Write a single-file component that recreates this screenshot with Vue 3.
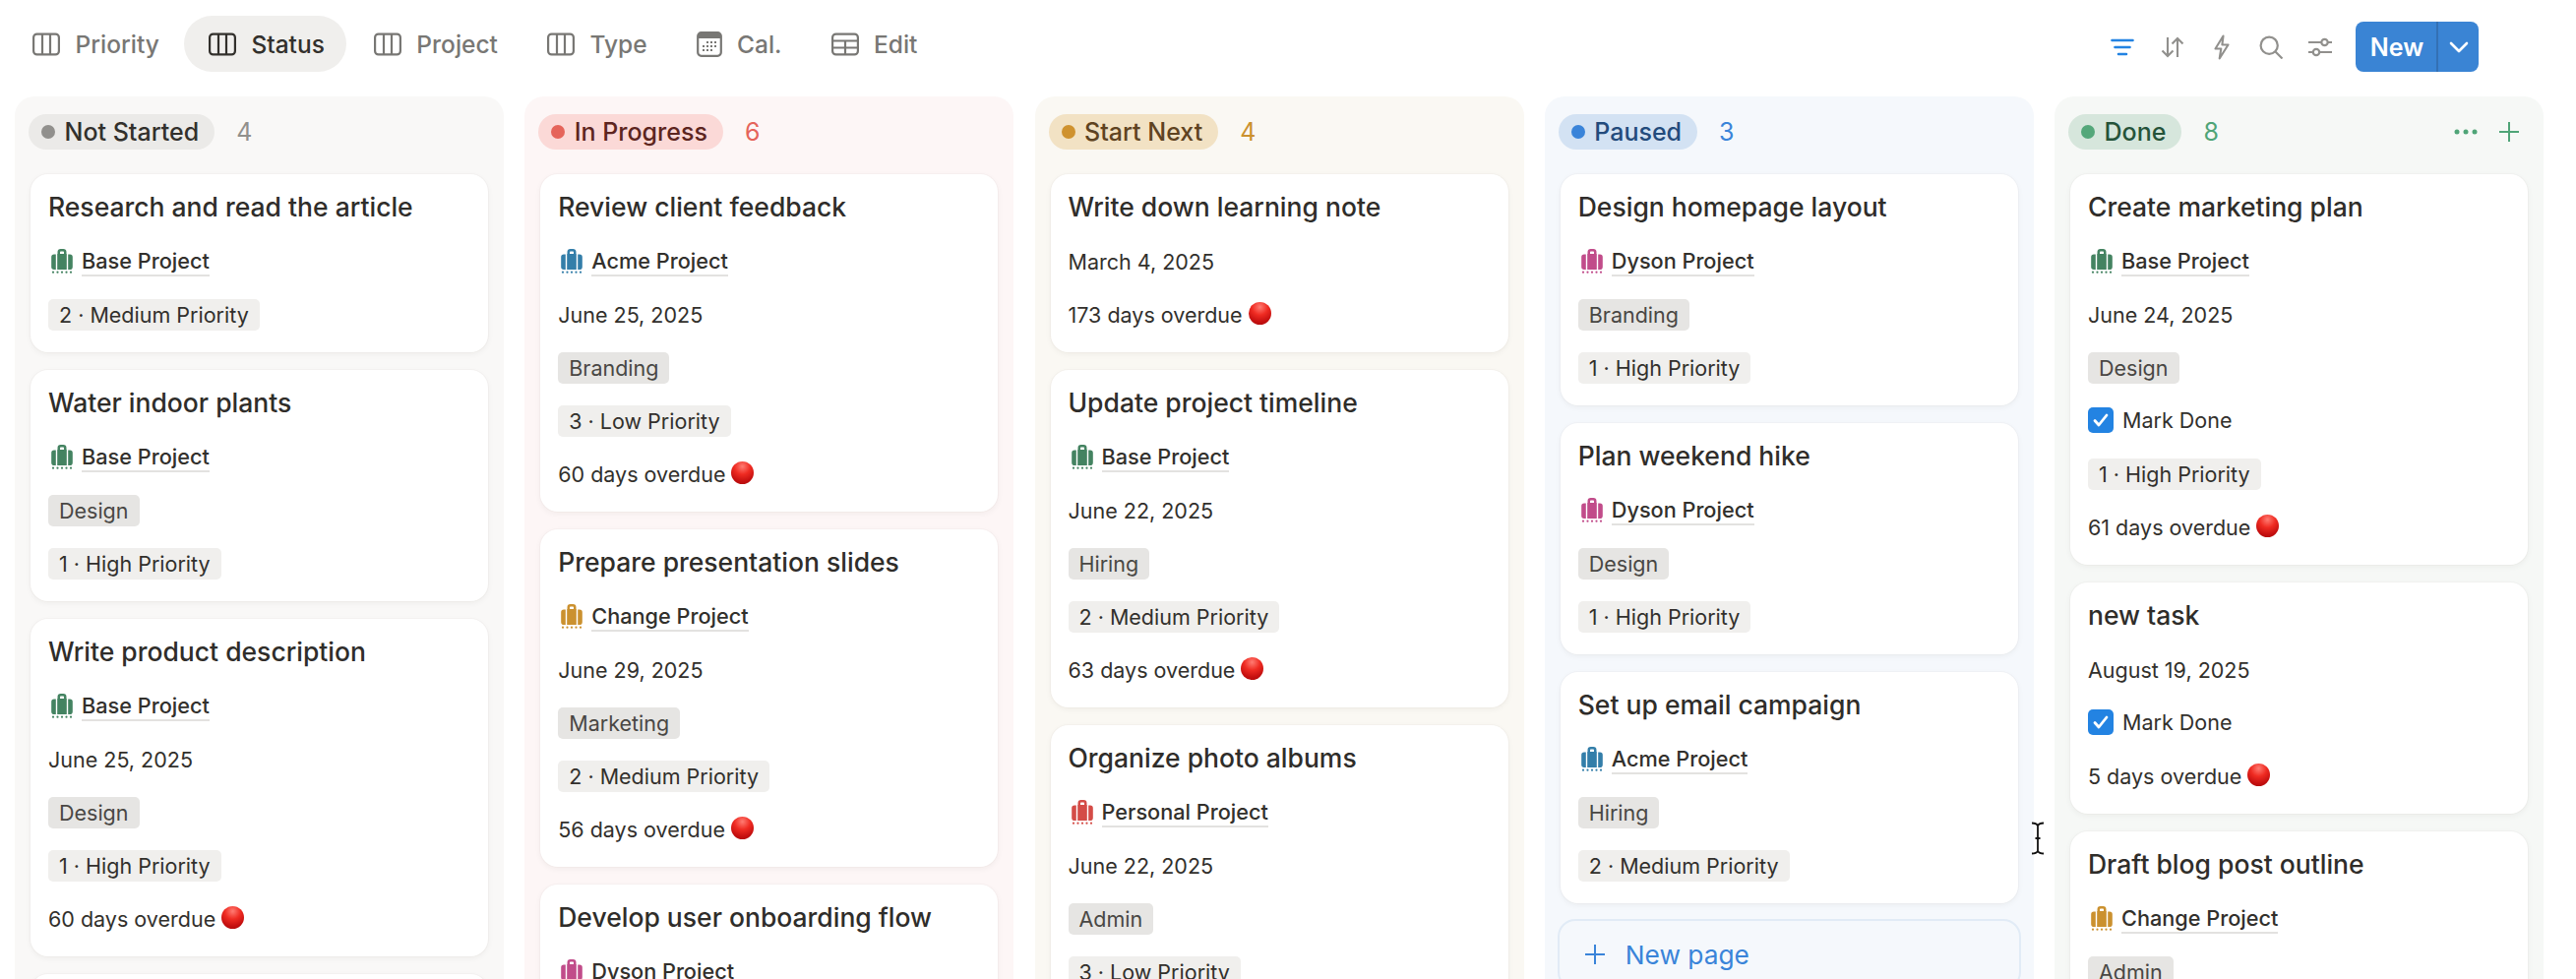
<script setup>
const P = {
  base: ['Base Project', '#448361'],
  acme: ['Acme Project', '#337ea9'],
  change: ['Change Project', '#cb912f'],
  dyson: ['Dyson Project', '#c14c8a'],
  personal: ['Personal Project', '#d44c47']
}
const tabs = [
  { label: 'Priority', icon: 'board' },
  { label: 'Status', icon: 'board', active: true },
  { label: 'Project', icon: 'board' },
  { label: 'Type', icon: 'board' },
  { label: 'Cal.', icon: 'cal' },
  { label: 'Edit', icon: 'table' }
]
const HIGH = '1 · High Priority', MED = '2 · Medium Priority', LOW = '3 · Low Priority'
const columns = [
  { name: 'Not Started', count: 4, theme: 'gray', cards: [
    { title: 'Research and read the article', project: 'base', priority: MED },
    { title: 'Water indoor plants', project: 'base', tag: 'Design', priority: HIGH },
    { title: 'Write product description', project: 'base', date: 'June 25, 2025', tag: 'Design', priority: HIGH, overdue: '60 days overdue' },
    { title: 'Clean the garage', project: 'base', date: 'June 25, 2025' }
  ] },
  { name: 'In Progress', count: 6, theme: 'red', cards: [
    { title: 'Review client feedback', project: 'acme', date: 'June 25, 2025', tag: 'Branding', priority: LOW, overdue: '60 days overdue' },
    { title: 'Prepare presentation slides', project: 'change', date: 'June 29, 2025', tag: 'Marketing', priority: MED, overdue: '56 days overdue' },
    { title: 'Develop user onboarding flow', project: 'dyson', date: 'June 25, 2025' }
  ] },
  { name: 'Start Next', count: 4, theme: 'yellow', cards: [
    { title: 'Write down learning note', date: 'March 4, 2025', overdue: '173 days overdue' },
    { title: 'Update project timeline', project: 'base', date: 'June 22, 2025', tag: 'Hiring', priority: MED, overdue: '63 days overdue' },
    { title: 'Organize photo albums', project: 'personal', date: 'June 22, 2025', tag: 'Admin', priority: LOW }
  ] },
  { name: 'Paused', count: 3, theme: 'blue', newPage: true, cards: [
    { title: 'Design homepage layout', project: 'dyson', tag: 'Branding', priority: HIGH },
    { title: 'Plan weekend hike', project: 'dyson', tag: 'Design', priority: HIGH },
    { title: 'Set up email campaign', project: 'acme', tag: 'Hiring', priority: MED }
  ] },
  { name: 'Done', count: 8, theme: 'green', actions: true, cards: [
    { title: 'Create marketing plan', project: 'base', date: 'June 24, 2025', tag: 'Design', done: true, priority: HIGH, overdue: '61 days overdue' },
    { title: 'new task', date: 'August 19, 2025', done: true, overdue: '5 days overdue' },
    { title: 'Draft blog post outline', project: 'change', tag: 'Admin', priority: LOW }
  ] }
]
</script>

<template>
  <div class="page">
    <header class="toolbar">
      <div v-for="t in tabs" :key="t.label" class="tab" :class="{ active: t.active }">
        <svg v-if="t.icon === 'board'" class="tab-icon" width="28" height="24" viewBox="0 0 28 24" fill="none" stroke="currentColor" stroke-width="2.2">
          <rect x="1.1" y="1.6" width="25.8" height="20.8" rx="3.5" />
          <path d="M10 2v20M18 2v20" />
        </svg>
        <svg v-else-if="t.icon === 'cal'" class="tab-icon" width="26" height="26" viewBox="0 0 26 26" fill="none">
          <rect x="1.2" y="1.2" width="23.6" height="23.6" rx="3.5" stroke="currentColor" stroke-width="2.2" />
          <path d="M2 3.5a2 2 0 0 1 2-2h18a2 2 0 0 1 2 2V7H2z" fill="currentColor" />
          <g fill="currentColor">
            <rect x="10" y="10" width="2" height="2" /><rect x="14" y="10" width="2" height="2" /><rect x="18" y="10" width="2" height="2" />
            <rect x="6" y="14" width="2" height="2" /><rect x="10" y="14" width="2" height="2" /><rect x="14" y="14" width="2" height="2" /><rect x="18" y="14" width="2" height="2" />
            <rect x="6" y="18" width="2" height="2" /><rect x="10" y="18" width="2" height="2" /><rect x="14" y="18" width="2" height="2" />
          </g>
        </svg>
        <svg v-else class="tab-icon" width="28" height="24" viewBox="0 0 28 24" fill="none" stroke="currentColor" stroke-width="2.2">
          <rect x="1.1" y="1.6" width="25.8" height="20.8" rx="3.5" />
          <path d="M2 8.5h24M2 15.5h24M14 8.5v14" />
        </svg>
        <span>{{ t.label }}</span>
      </div>

      <div class="tools">
        <span class="tool filter">
          <svg width="24" height="18" viewBox="0 0 24 18" fill="none" stroke="currentColor" stroke-width="2.6" stroke-linecap="round">
            <path d="M1.5 2h21M4.5 9h15M8 16h8" />
          </svg>
        </span>
        <span class="tool">
          <svg width="24" height="22" viewBox="0 0 24 22" fill="none" stroke="currentColor" stroke-width="2.1">
            <path d="M7 1v19M1.5 14.5 7 20l5.5-5.5M17 21V2M11.5 7.5 17 2l5.5 5.5" />
          </svg>
        </span>
        <span class="tool">
          <svg width="16" height="26" viewBox="0 0 16 26" fill="none" stroke="currentColor" stroke-width="2.1" stroke-linejoin="round">
            <path d="M9.5 1.5 1.5 14.5h5.8l-1.6 10 8.8-14H8.4z" />
          </svg>
        </span>
        <span class="tool">
          <svg width="24" height="24" viewBox="0 0 24 24" fill="none" stroke="currentColor" stroke-width="2.2">
            <circle cx="10.2" cy="10.2" r="8.6" /><path d="m16.5 16.5 7 7" />
          </svg>
        </span>
        <span class="tool">
          <svg width="24" height="20" viewBox="0 0 24 20" fill="none" stroke="currentColor" stroke-width="2.2">
            <path d="M0 5h13M20 5h4M0 15h5M11.5 15H24" />
            <circle cx="16.5" cy="5" r="3.2" /><circle cx="8" cy="15" r="3.2" />
          </svg>
        </span>
        <div class="new-btn">
          <span class="new-label">New</span>
          <span class="new-caret">
            <svg width="20" height="12" viewBox="0 0 20 12" fill="none" stroke="#fff" stroke-width="2.6" stroke-linecap="round" stroke-linejoin="round">
              <path d="m2 2 8 8 8-8" />
            </svg>
          </span>
        </div>
      </div>
    </header>

    <main class="board">
      <section v-for="col in columns" :key="col.name" class="col" :class="col.theme">
        <div class="col-head">
          <span class="pill"><i class="dot"></i>{{ col.name }}</span>
          <span class="count">{{ col.count }}</span>
          <span v-if="col.actions" class="col-actions">
            <svg width="24" height="6" viewBox="0 0 24 6" fill="currentColor">
              <circle cx="3" cy="3" r="2.5" /><circle cx="12" cy="3" r="2.5" /><circle cx="21" cy="3" r="2.5" />
            </svg>
            <svg width="20" height="20" viewBox="0 0 20 20" fill="none" stroke="currentColor" stroke-width="2">
              <path d="M10 0v20M0 10h20" />
            </svg>
          </span>
        </div>

        <article v-for="c in col.cards" :key="c.title" class="card">
          <h3 class="title">{{ c.title }}</h3>
          <div v-if="c.project" class="row project">
            <svg class="bag" width="22" height="25" viewBox="0 0 22 25" :fill="P[c.project][1]">
              <path d="M6.5 5V3.2A3.2 3.2 0 0 1 9.7 0h2.6a3.2 3.2 0 0 1 3.2 3.2V5h.3v16H6.200V5zM9 3.200V5h4V3.200a.8.8 0 0 0-.8-.8H9.800a.8.8 0 0 0-.8.8z" />
              <path d="M4.800 5.500V21H3a2.800 2.800 0 0 1-2.800-2.800V8.300A2.800 2.800 0 0 1 3 5.500zM17.200 5.500H19a2.800 2.800 0 0 1 2.800 2.800v9.900A2.800 2.800 0 0 1 19 21h-1.800z" />
              <circle cx="2" cy="23.700" r="1.100" /><circle cx="6.500" cy="23.700" r="1.100" /><circle cx="11" cy="23.700" r="1.100" /><circle cx="15.500" cy="23.700" r="1.100" /><circle cx="20" cy="23.700" r="1.100" />
            </svg>
            <span class="link">{{ P[c.project][0] }}</span>
          </div>
          <div v-if="c.date" class="row text">{{ c.date }}</div>
          <div v-if="c.tag" class="row"><span class="tag cat">{{ c.tag }}</span></div>
          <div v-if="c.done" class="row check">
            <span class="box">
              <svg width="16" height="14" viewBox="0 0 16 14" fill="none" stroke="#fff" stroke-width="2.800" stroke-linecap="round" stroke-linejoin="round">
                <path d="m2 7.500 4 4.500 8-10" />
              </svg>
            </span>
            Mark Done
          </div>
          <div v-if="c.priority" class="row"><span class="tag">{{ c.priority }}</span></div>
          <div v-if="c.overdue" class="row text">{{ c.overdue }}<i class="overdue-dot"></i></div>
        </article>

        <div v-if="col.newPage" class="new-page">
          <svg width="20" height="20" viewBox="0 0 20 20" fill="none" stroke="currentColor" stroke-width="2">
            <path d="M10 0v20M0 10h20" />
          </svg>
          New page
        </div>
      </section>
    </main>

    <svg class="cursor" width="14" height="34" viewBox="0 0 14 34" fill="none">
      <path d="M1 1.500c3 0 5 .8 6 2.500 1-1.700 3-2.500 6-2.500M1 32.500c3 0 5-.8 6-2.500 1 1.700 3 2.500 6 2.500M7 4v26M4.500 17h5" stroke="#fff" stroke-width="4" />
      <path d="M1 1.500c3 0 5 .8 6 2.500 1-1.700 3-2.500 6-2.500M1 32.500c3 0 5-.8 6-2.500 1 1.700 3 2.500 6 2.500M7 4v26M4.500 17h5" stroke="#111" stroke-width="1.800" />
    </svg>
  </div>
</template>

<style>
html, body { margin: 0; background: #fff; overflow: hidden; }
</style>

<style scoped>
.page {
  position: relative;
  width: 2618px;
  height: 995px;
  overflow: hidden;
  background: #fff;
  font-family: Inter, "Liberation Sans", sans-serif;
  color: #32302c;
}
.toolbar {
  height: 98px;
  box-sizing: border-box;
  padding: 16px 99px 0 8px;
  display: flex;
  align-items: flex-start;
  gap: 3px;
}
.tab {
  height: 57px;
  padding: 0 22px 0 25px;
  display: flex;
  align-items: center;
  gap: 15.5px;
  border-radius: 29px;
  font-size: 24.5px;
  font-weight: 500;
  color: #787774;
}
.tab.active {
  background: #f0efed;
  color: #32302c;
}
.tab-icon { flex: none; }
.tools {
  margin-left: auto;
  margin-top: 6px;
  display: flex;
  align-items: center;
  height: 51px;
}
.tool {
  width: 50px;
  display: flex;
  justify-content: center;
  color: #91908d;
}
.tool.filter { color: #2383e2; padding-right: 3px; box-sizing: border-box; }
.new-btn {
  margin-left: 11px;
  width: 125px;
  height: 51px;
  border-radius: 8px;
  background: #3a84d4;
  color: #fff;
  display: flex;
  font-size: 25px;
  font-weight: 600;
}
.new-label {
  width: 84px;
  display: flex;
  align-items: center;
  justify-content: center;
  padding-left: 2px;
  border-right: 2px solid #3470b4;
  box-sizing: border-box;
}
.new-caret {
  flex: 1;
  display: flex;
  align-items: center;
  justify-content: center;
}
.board {
  display: grid;
  grid-template-columns: repeat(5, 497px);
  gap: 21.25px;
  padding-left: 15px;
  align-items: start;
}
.col {
  height: 1100px;
  box-sizing: border-box;
  padding: 18px 16px 0;
  border-radius: 20px;
  display: flex;
  flex-direction: column;
  gap: 18px;
}
.col-head {
  height: 36px;
  margin: 0 -2px 7px;
  display: flex;
  align-items: center;
  gap: 22px;
  font-size: 25px;
}
.pill {
  height: 36px;
  padding: 0 16px 0 13px;
  display: flex;
  align-items: center;
  gap: 9.5px;
  border-radius: 18px;
  font-weight: 500;
}
.dot {
  width: 14px;
  height: 14px;
  border-radius: 50%;
}
.col-actions {
  margin-left: auto;
  margin-right: 11px;
  display: flex;
  align-items: center;
  gap: 22px;
}
.gray { background: #f9f8f7; }
.gray .pill { background: #ebeae8; color: #32302c; }
.gray .dot { background: #91908d; }
.gray .count { color: #91908d; }
.red { background: #fdf6f6; }
.red .pill { background: #fbd9d7; color: #5d2520; }
.red .dot { background: #e5645a; }
.red .count { color: #e5645a; }
.yellow { background: #faf8f3; }
.yellow .pill { background: #f2e2c4; color: #5f4321; }
.yellow .dot { background: #cf922f; }
.yellow .count { color: #cb912f; }
.blue { background: #f5f8fc; }
.blue .pill { background: #d3e2f3; color: #234b7c; }
.blue .dot { background: #3a84d9; }
.blue .count { color: #3a84d9; }
.green { background: #f6f8f6; }
.green .pill { background: #d6e6dc; color: #25533a; }
.green .dot { background: #54a77a; }
.green .count, .green .col-actions { color: #4fa477; }
.card {
  flex: none;
  background: #fff;
  border-radius: 18px;
  padding: 18px 18px 23px;
  display: flex;
  flex-direction: column;
  gap: 22px;
  box-shadow: 0 0 0 1px rgba(80, 60, 40, 0.025), 0 2px 6px rgba(40, 30, 20, 0.05);
}
.title {
  margin: 0 0 2px;
  height: 30px;
  line-height: 31px;
  font-size: 26.5px;
  font-weight: 500;
  white-space: nowrap;
  color: #2f2d2a;
}
.row {
  height: 32px;
  display: flex;
  align-items: center;
  font-size: 21.5px;
  white-space: nowrap;
}
.text { padding-top: 2px; box-sizing: border-box; }
.project { gap: 9px; padding-left: 3px; font-weight: 500; font-size: 21.7px; }
.bag { flex: none; }
.link {
  line-height: 30px;
  border-bottom: 2px solid #e3e2e0;
  height: 29px;
}
.tag {
  height: 32px;
  line-height: 32px;
  padding: 0 11px;
  margin-top: 2px;
  border-radius: 5px;
  background: #f0efed;
}
.tag.cat {
  background: #e6e5e3;
  color: #494744;
}
.check { gap: 9px; }
.box {
  width: 26px;
  height: 26px;
  border-radius: 5px;
  background: #2383e2;
  display: flex;
  align-items: center;
  justify-content: center;
}
.overdue-dot {
  width: 23px;
  height: 23px;
  margin: 0 0 3px 6px;
  border-radius: 50%;
  background: radial-gradient(circle at 50% 22%, #ff7b72 0%, #ef2b22 38%, #c40f0f 72%, #a50c0c 100%);
}
.new-page {
  flex: none;
  height: 72px;
  box-sizing: border-box;
  margin: -2px -3px 0;
  padding-left: 26px;
  display: flex;
  align-items: center;
  gap: 21px;
  border: 2px solid #e1ebf6;
  border-radius: 18px;
  color: #3a84d9;
  font-size: 26.3px;
}
.cursor {
  position: absolute;
  left: 2064px;
  top: 835px;
}
</style>
